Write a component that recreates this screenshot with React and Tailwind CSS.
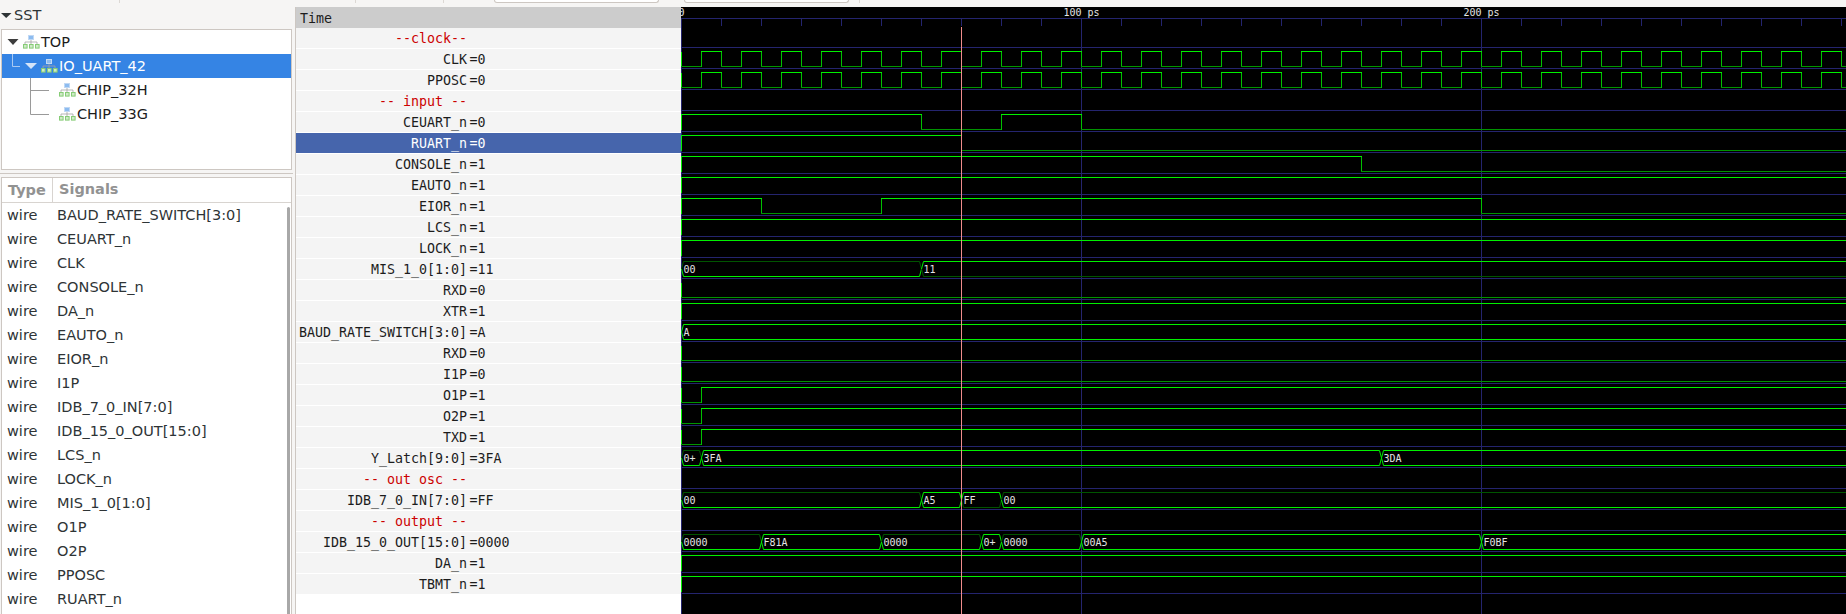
import React from "react";

const PX_PER_PS = 4;
const ROW_H = 21;
const HIGH = "#00f000";
const LOW = "#009400";
const DIM = "#005400";
const TRANS = "#00c000";
const GRID = "#24246e";

// x values are pixels from time 0
const rows = [
    { name: "--clock--", comment: true },
    { name: "CLK", value: "0", clock: true },
    { name: "PPOSC", value: "0", clock: true },
    { name: "-- input --", comment: true },
    { name: "CEUART_n", value: "0", wave: [[0, 1], [240, 0], [320, 1], [400, 0]] },
    { name: "RUART_n", value: "0", wave: [[0, 1], [280, 0]], selected: true },
    { name: "CONSOLE_n", value: "1", wave: [[0, 1], [680, 0]] },
    { name: "EAUTO_n", value: "1", wave: [[0, 1]] },
    { name: "EIOR_n", value: "1", wave: [[0, 1], [80, 0], [200, 1], [800, 0]] },
    { name: "LCS_n", value: "1", wave: [[0, 1]] },
    { name: "LOCK_n", value: "1", wave: [[0, 1]] },
    { name: "MIS_1_0[1:0]", value: "11", bus: [[0, "00", DIM, HIGH], [240, "11", HIGH, DIM]] },
    { name: "RXD", value: "0", wave: [[0, 0]] },
    { name: "XTR", value: "1", wave: [[0, 1]] },
    { name: "BAUD_RATE_SWITCH[3:0]", value: "A", bus: [[0, "A", HIGH, HIGH]] },
    { name: "RXD", value: "0", wave: [[0, 0]] },
    { name: "I1P", value: "0", wave: [[0, 0]] },
    { name: "O1P", value: "1", wave: [[0, 0], [20, 1]] },
    { name: "O2P", value: "1", wave: [[0, 0], [20, 1]] },
    { name: "TXD", value: "1", wave: [[0, 0], [20, 1]] },
    { name: "Y_Latch[9:0]", value: "3FA", bus: [[0, "0+", DIM, HIGH], [20, "3FA", HIGH, HIGH], [700, "3DA", HIGH, HIGH]] },
    { name: "-- out osc --", comment: true },
    { name: "IDB_7_0_IN[7:0]", value: "FF", bus: [[0, "00", DIM, HIGH], [240, "A5", HIGH, HIGH], [280, "FF", HIGH, DIM], [320, "00", DIM, HIGH]] },
    { name: "-- output --", comment: true },
    { name: "IDB_15_0_OUT[15:0]", value: "0000", bus: [[0, "0000", DIM, HIGH], [80, "F81A", HIGH, HIGH], [200, "0000", DIM, HIGH], [300, "0+", HIGH, HIGH], [320, "0000", DIM, HIGH], [400, "00A5", HIGH, HIGH], [800, "F0BF", HIGH, HIGH]] },
    { name: "DA_n", value: "1", wave: [[0, 1]] },
    { name: "TBMT_n", value: "1", wave: [[0, 1]] },
];

const signals = [
    "BAUD_RATE_SWITCH[3:0]", "CEUART_n", "CLK", "CONSOLE_n", "DA_n", "EAUTO_n", "EIOR_n", "I1P",
    "IDB_7_0_IN[7:0]", "IDB_15_0_OUT[15:0]", "LCS_n", "LOCK_n", "MIS_1_0[1:0]", "O1P", "O2P", "PPOSC", "RUART_n",
];

const WIDTH = 1165;
const X0 = 0;

function clockWave() {
    const wave = [];
    for (let x = 0, v = 0; x < WIDTH; x += 20, v = 1 - v) wave.push([x, v]);
    return wave;
}

function BinaryTrace({ wave, top }) {
    const hi = top + 2.5;
    const lo = top + 17.5;
    return (
        <g shapeRendering="crispEdges" fill="none">
            <line x1={X0 + 0.5} x2={X0 + 0.5} y1={hi} y2={lo} stroke={HIGH} />
            {wave.map(([x, v], i) => {
                const end = i + 1 < wave.length ? wave[i + 1][0] : WIDTH;
                return (
                    <g key={x}>
                        {i > 0 && <line x1={X0 + x + 0.5} x2={X0 + x + 0.5} y1={hi} y2={lo} stroke={TRANS} />}
                        <line x1={X0 + x} x2={X0 + end + 1} y1={v ? hi : lo} y2={v ? hi : lo} stroke={v ? HIGH : LOW} />
                    </g>
                );
            })}
        </g>
    );
}

function BusTrace({ bus, top }) {
    const hi = top + 2.5;
    const lo = top + 17.5;
    const mid = top + 10;
    return (
        <g fill="none">
            {bus.map(([x, label, topColor, botColor], i) => {
                const a = X0 + x + 0.5;
                const b = i + 1 < bus.length ? X0 + bus[i + 1][0] + 0.5 : WIDTH + 10;
                return (
                    <g key={x}>
                        <polyline points={`${a},${mid} ${a + 2},${hi} ${b - 2},${hi} ${b},${mid}`} stroke={topColor} />
                        <polyline points={`${a},${mid} ${a + 2},${lo} ${b - 2},${lo} ${b},${mid}`} stroke={botColor} />
                        <text x={a + 2} y={top + 14} fill="#e4e4e4" fontSize="10">{label}</text>
                    </g>
                );
            })}
        </g>
    );
}

function Waves() {
    const ticks = [];
    for (let x = 0; x < WIDTH; x += 40) ticks.push(x);
    const majors = [0, 100, 200];
    return (
        <svg width={WIDTH} height={607} className="block bg-black font-['DejaVu_Sans_Mono',monospace]">
            <g shapeRendering="crispEdges" stroke={GRID}>
                <line x1="0" x2={WIDTH} y1="11.5" y2="11.5" />
                {rows.map((r, i) => (
                    <line key={i} x1="0" x2={WIDTH} y1={21 + i * ROW_H + 19.5} y2={21 + i * ROW_H + 19.5} />
                ))}
                {ticks.map((x) => (
                    <line key={x} x1={X0 + x + 0.5} x2={X0 + x + 0.5} y1="11" y2="19" />
                ))}
                {majors.map((t) => (
                    <line key={t} x1={X0 + t * PX_PER_PS + 0.5} x2={X0 + t * PX_PER_PS + 0.5} y1="11" y2="607" />
                ))}
            </g>
            {majors.map((t) => (
                <text key={t} x={X0 + t * PX_PER_PS + 0.5} y="9" textAnchor="middle" fill="#e4e4e4" fontSize="10">
                    {t === 0 ? "0" : `${t} ps`}
                </text>
            ))}
            {rows.map((r, i) => {
                const top = 21 + i * ROW_H;
                if (r.clock) return <BinaryTrace key={i} wave={clockWave()} top={top} />;
                if (r.wave) return <BinaryTrace key={i} wave={r.wave} top={top} />;
                if (r.bus) return <BusTrace key={i} bus={r.bus} top={top} />;
                return null;
            })}
            <line x1={X0 + 280.5} x2={X0 + 280.5} y1="20" y2="607" stroke="#f08c8c" shapeRendering="crispEdges" />
        </svg>
    );
}

function NamePanel() {
    return (
        <div className="w-[385px] shrink-0 bg-white font-['DejaVu_Sans_Mono',monospace] text-[13.3px] text-[#1c1c1c]">
            <div className="h-[21px] bg-[#cccccc] pl-1 pt-px leading-[21px]">Time</div>
            {rows.map((r, i) => (
                <div
                    key={i}
                    className={`flex h-5 mb-px pt-px leading-5 ${r.selected ? "bg-[#4665ac] text-white" : "bg-[#f4f4f4]"}`}
                >
                    <span className={`w-[171px] shrink-0 text-right whitespace-pre ${r.comment ? "text-[#cc0000]" : ""}`}>
                        {r.name}
                    </span>
                    {r.value && <span className="ml-[2.5px]">={r.value}</span>}
                </div>
            ))}
        </div>
    );
}

function HierIcon({ x }) {
    return (
        <g transform={`translate(${x} 5)`}>
            <path d="M8 4V7M2 9V7H14V9M8 7V9" stroke="#a4a4a4" fill="none" strokeWidth="0.8" />
            <rect x="5.5" y="0.5" width="5" height="4" fill="#8dbcf0" stroke="#c0d8f4" />
            {[0, 6, 12].map((gx) => (
                <rect key={gx} x={gx + 0.5} y="9.5" width="3.6" height="3.6" fill="#cfeac6" stroke="#86cc76" />
            ))}
        </g>
    );
}

function TreeRow({ gutter, selected, label, children }) {
    return (
        <div className={`flex h-6 items-center ${selected ? "bg-[#3584e4] text-white" : "text-[#1c1c1c]"}`}>
            <svg width={gutter} height="24" className="block shrink-0">
                {children}
            </svg>
            <span className="pt-[2px]">{label}</span>
        </div>
    );
}

function Sidebar() {
    return (
        <div className="w-[296px] shrink-0 flex flex-col border-r border-[#cdc7c2] font-['DejaVu_Sans',sans-serif] text-[14.5px] text-[#2e3436]">
            <div className="flex h-[22px] items-center pb-1">
                <svg width="14" height="12" className="block shrink-0">
                    <path d="M1 3H11.5L6.2 8Z" fill="#2e3436" />
                </svg>
                <span>SST</span>
            </div>
            <div className="ml-px mr-[3px] h-[141px] border border-[#cdc7c2] bg-white">
                <TreeRow gutter={39} label="TOP">
                    <path d="M5.5 9H16.5L11 15Z" fill="#3d3d3d" />
                    <HierIcon x={21} />
                </TreeRow>
                <TreeRow gutter={57} label="IO_UART_42" selected>
                    <path d="M10.5 0V12.5H18" stroke="#a9c9f2" fill="none" />
                    <path d="M23 9H35L29 15Z" fill="#d4e4f8" />
                    <HierIcon x={39} />
                </TreeRow>
                <TreeRow gutter={75} label="CHIP_32H">
                    <path d="M28.5 0V24M28.5 12.5H47" stroke="#9a9a9a" fill="none" />
                    <HierIcon x={57} />
                </TreeRow>
                <TreeRow gutter={75} label="CHIP_33G">
                    <path d="M28.5 0V12.5H47" stroke="#9a9a9a" fill="none" />
                    <HierIcon x={57} />
                </TreeRow>
            </div>
            <div className="mt-[3px] mr-[2px] h-px bg-[#cdc7c2]" />
            <div className="ml-px mr-[3px] mt-[3px] flex-1 min-h-0 border-x border-t border-[#cdc7c2] bg-white overflow-hidden relative">
                <div className="flex h-[25px] items-center border-b border-[#d8d4d0] font-bold text-[#929292]">
                    <div className="w-[51px] border-r border-[#d8d4d0] pl-[6px] leading-[24px]">Type</div>
                    <div className="pl-[6px]">Signals</div>
                </div>
                {signals.map((s) => (
                    <div key={s} className="flex h-6 items-center">
                        <span className="w-[50px] pl-[5px] pt-[2px] shrink-0">wire</span>
                        <span className="pl-[5px] pt-[2px] whitespace-pre">{s}</span>
                    </div>
                ))}
                <div className="absolute right-[1px] top-[29px] bottom-0 w-[3px] rounded-t-full bg-[#a8a8a8]" />
            </div>
        </div>
    );
}

function TopStrip() {
    return (
        <div className="flex h-[7px] items-start">
            <div className="ml-[119px] h-[3px] w-px bg-[#dcd8d4]" />
            <div className="ml-[235px] h-[3px] w-px bg-[#dcd8d4]" />
            <div className="ml-[87px] h-[3px] w-px bg-[#dcd8d4]" />
            <div className="ml-[50px] h-[3px] w-[165px] rounded-b-[4px] border-x border-b border-[#cdc7c2] bg-white" />
            <div className="ml-[25px] h-[3px] w-[165px] rounded-b-[4px] border-x border-b border-[#cdc7c2] bg-white" />
            <div className="ml-[10px] h-[3px] w-px bg-[#dcd8d4]" />
        </div>
    );
}

export default function App() {
    return (
        <div className="h-[614px] w-[1846px] overflow-hidden bg-[#f6f5f4]">
            <TopStrip />
            <div className="flex h-[607px]">
                <Sidebar />
                <NamePanel />
                <Waves />
            </div>
        </div>
    );
}
